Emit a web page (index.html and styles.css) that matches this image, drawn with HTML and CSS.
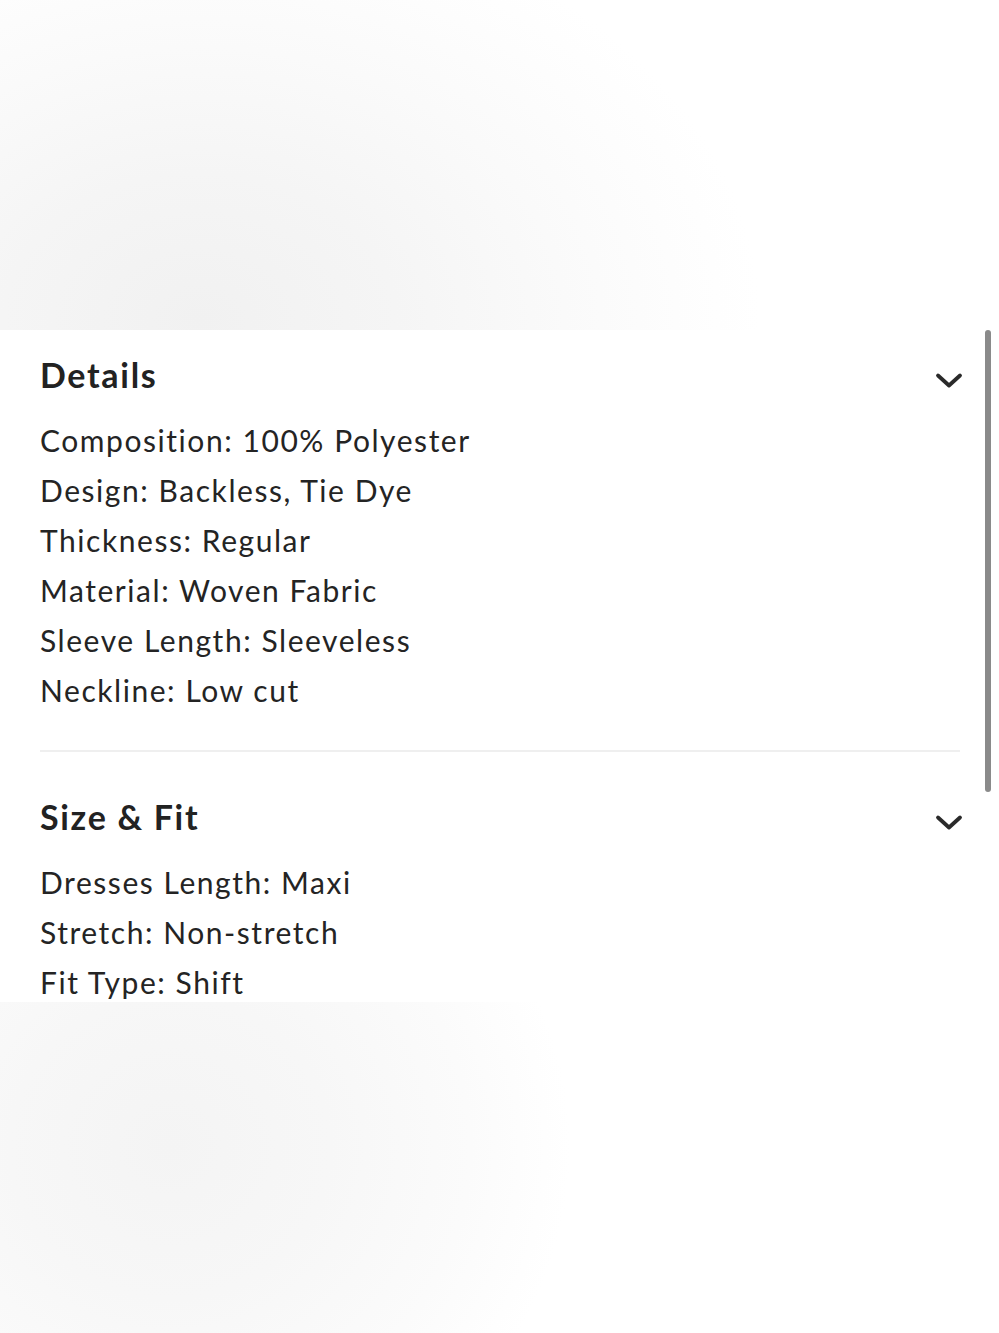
FILE: index.html
```html
<!DOCTYPE html>
<html>
<head>
<meta charset="utf-8">
<link rel="stylesheet" href="styles.css">
</head>
<body>
<div class="backdrop-top"></div>
<main class="panel">
  <section class="section first">
    <div class="section-head">
      <h2>Details</h2>
      <svg class="chev" width="30" height="18" viewBox="0 0 30 18"><path d="M4 3.5 L15 13.5 L26 3.5" fill="none" stroke="#2a2a2a" stroke-width="3.8" stroke-linecap="round" stroke-linejoin="round"/></svg>
    </div>
    <ul class="specs">
      <li>Composition: 100% Polyester</li>
      <li>Design: Backless, Tie Dye</li>
      <li>Thickness: Regular</li>
      <li>Material: Woven Fabric</li>
      <li>Sleeve Length: Sleeveless</li>
      <li>Neckline: Low cut</li>
    </ul>
  </section>
  <hr class="divider">
  <section class="section">
    <div class="section-head">
      <h2>Size &amp; Fit</h2>
      <svg class="chev" width="30" height="18" viewBox="0 0 30 18"><path d="M4 3.5 L15 13.5 L26 3.5" fill="none" stroke="#2a2a2a" stroke-width="3.8" stroke-linecap="round" stroke-linejoin="round"/></svg>
    </div>
    <ul class="specs">
      <li>Dresses Length: Maxi</li>
      <li>Stretch: Non-stretch</li>
      <li>Fit Type: Shift</li>
    </ul>
  </section>
  <div class="scrollbar"></div>
</main>
<div class="backdrop-bottom"></div>
</body>
</html>
```

FILE: styles.css
```css
html, body {
  margin: 0;
  padding: 0;
  background: #ffffff;
}
body {
  width: 999px;
  height: 1333px;
  overflow: hidden;
  font-family: Lato, "Open Sans", sans-serif;
  font-variant-ligatures: none;
  color: #242424;
}
.backdrop-top {
  height: 330px;
  background:
    radial-gradient(ellipse 560px 420px at 200px 320px, #f1f1f1 0%, #f5f5f5 35%, #fafafa 65%, #fdfdfd 85%, #ffffff 100%);
}
.backdrop-bottom {
  height: 331px;
  background:
    radial-gradient(ellipse 400px 380px at 170px 145px, #f4f4f4 0%, #f7f7f7 40%, #fbfbfb 75%, #ffffff 100%);
}
.panel {
  position: relative;
  height: 672px;
  overflow: hidden;
  background: #ffffff;
  padding: 0 39px 0 40px;
}
.section-head {
  display: flex;
  align-items: center;
  justify-content: space-between;
  height: 44px;
}
.section.first {
  padding-top: 23px;
}
.section {
  padding-top: 43px;
}
h2 {
  margin: 0;
  font-size: 34px;
  font-weight: 700;
  letter-spacing: 1.7px;
  line-height: 44px;
  color: #222;
}
.chev {
  margin-top: 12px;
  margin-right: -4px;
}
.specs {
  list-style: none;
  margin: 18px 0 0;
  padding: 0;
}
.specs li {
  font-size: 30px;
  letter-spacing: 1.55px;
  line-height: 50px;
  height: 50px;
  white-space: nowrap;
}
.divider {
  border: 0;
  border-top: 2px solid #efefef;
  margin: 35px 0 0;
}
.scrollbar {
  position: absolute;
  top: 0;
  right: 8px;
  width: 6px;
  height: 462px;
  border-radius: 3px;
  background: #8a8a8a;
}
```
